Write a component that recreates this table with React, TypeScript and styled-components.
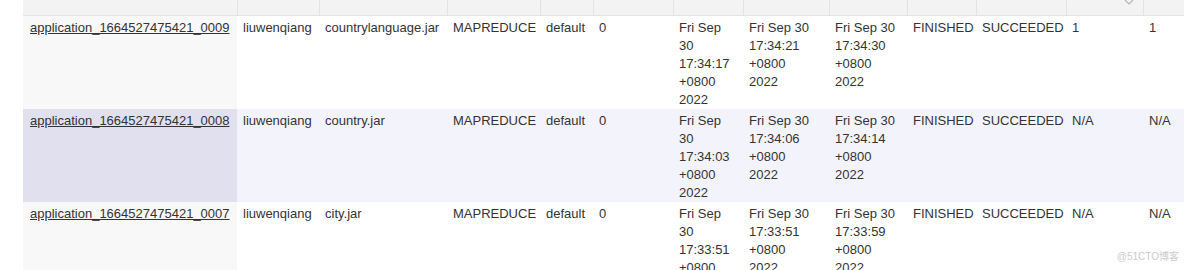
import React from "react"
import styled, { createGlobalStyle } from "styled-components"

const GlobalStyle = createGlobalStyle`
    html, body {
        margin: 0;
        padding: 0;
        background: #ffffff;
        overflow: hidden;
    }
    body {
        font-family: "Liberation Sans", Arial, "Noto Sans CJK SC", sans-serif;
    }
`

const Page = styled.div`
    position: relative;
    width: 1184px;
    height: 270px;
    overflow: hidden;
    padding-left: 23px;
    box-sizing: border-box;
    background: #ffffff;
`

const Table = styled.table`
    border-collapse: collapse;
    table-layout: fixed;
    width: 1180px;
    font-size: 13px;
    line-height: 18px;
    color: #333333;
`

const HeadCell = styled.th`
    position: relative;
    height: 15px;
    padding: 0;
    background: #f3f3f3;
    border-right: 1px solid #e3e3e3;
    border-bottom: 1px solid #e4e4e4;
`

const SortMark = styled.svg`
    position: absolute;
    right: 9px;
    top: 0;
`

const Row = styled.tr<{ $odd: boolean }>`
    background: ${p => (p.$odd ? "#f3f3fc" : "#ffffff")};
`

const Cell = styled.td<{ $sorted?: boolean; $odd?: boolean }>`
    vertical-align: top;
    padding: 3px 6px 0 6px;
    height: 90px;
    overflow: hidden;
    white-space: normal;
    background: ${p => (p.$sorted ? (p.$odd ? "#e1e0ef" : "#f8f8f8") : "transparent")};
`

const DateText = styled.span`
    display: block;
    max-width: 66px;
`

const AppLink = styled.a`
    color: #333333;
    text-decoration: underline;
    padding-left: 1px;
`

const Watermark = styled.div`
    position: absolute;
    right: 5px;
    bottom: 7px;
    font-family: "Liberation Sans", "Noto Sans CJK SC", sans-serif;
    font-size: 10px;
    color: #cbcbcb;
`

const widths = [214, 82, 128, 93, 53, 80, 70, 86, 78, 69, 90, 77, 60]

interface AppRow {
    id: string
    user: string
    name: string
    start: string
    launch: string
    finish: string
    alloc: string
    running: string
}

const rows: AppRow[] = [
    {
        id: "application_1664527475421_0009",
        user: "liuwenqiang",
        name: "countrylanguage.jar",
        start: "Fri Sep 30 17:34:17 +0800 2022",
        launch: "Fri Sep 30 17:34:21 +0800 2022",
        finish: "Fri Sep 30 17:34:30 +0800 2022",
        alloc: "1",
        running: "1",
    },
    {
        id: "application_1664527475421_0008",
        user: "liuwenqiang",
        name: "country.jar",
        start: "Fri Sep 30 17:34:03 +0800 2022",
        launch: "Fri Sep 30 17:34:06 +0800 2022",
        finish: "Fri Sep 30 17:34:14 +0800 2022",
        alloc: "N/A",
        running: "N/A",
    },
    {
        id: "application_1664527475421_0007",
        user: "liuwenqiang",
        name: "city.jar",
        start: "Fri Sep 30 17:33:51 +0800 2022",
        launch: "Fri Sep 30 17:33:51 +0800 2022",
        finish: "Fri Sep 30 17:33:59 +0800 2022",
        alloc: "N/A",
        running: "N/A",
    },
]

export default function App() {
    return (
        <>
            <GlobalStyle />
            <Page>
                <Table>
                    <colgroup>
                        {widths.map((w, i) => (
                            <col key={i} style={{ width: w }} />
                        ))}
                    </colgroup>
                    <thead>
                        <tr>
                            {widths.map((_, i) => (
                                <HeadCell key={i}>
                                    {i === 11 && (
                                        <SortMark width="10" height="5" viewBox="0 0 10 5">
                                            <path d="M1 0 L5 4 L9 0" fill="none" stroke="#b5b5b5" strokeWidth="1.2" />
                                        </SortMark>
                                    )}
                                </HeadCell>
                            ))}
                        </tr>
                    </thead>
                    <tbody>
                        {rows.map((r, i) => {
                            const odd = i % 2 === 1
                            return (
                                <Row key={r.id} $odd={odd}>
                                    <Cell $sorted $odd={odd}>
                                        <AppLink href="#">{r.id}</AppLink>
                                    </Cell>
                                    <Cell>{r.user}</Cell>
                                    <Cell>{r.name}</Cell>
                                    <Cell>MAPREDUCE</Cell>
                                    <Cell>default</Cell>
                                    <Cell>0</Cell>
                                    <Cell><DateText>{r.start}</DateText></Cell>
                                    <Cell><DateText>{r.launch}</DateText></Cell>
                                    <Cell><DateText>{r.finish}</DateText></Cell>
                                    <Cell>FINISHED</Cell>
                                    <Cell>SUCCEEDED</Cell>
                                    <Cell>{r.alloc}</Cell>
                                    <Cell>{r.running}</Cell>
                                </Row>
                            )
                        })}
                    </tbody>
                </Table>
                <Watermark>@51CTO博客</Watermark>
            </Page>
        </>
    )
}
